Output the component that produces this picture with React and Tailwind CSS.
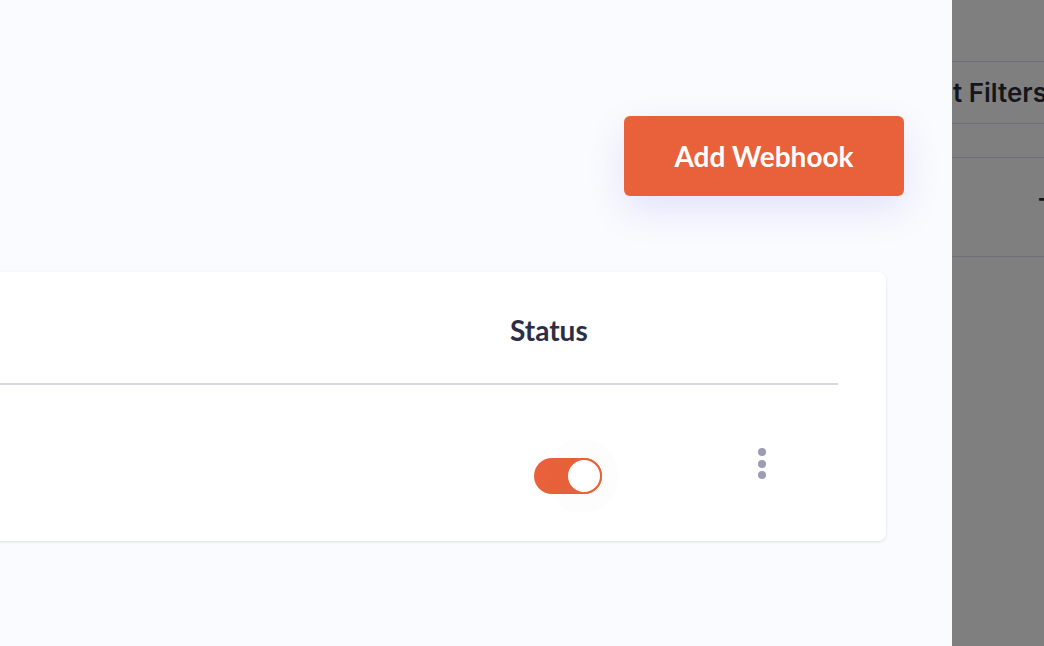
import React, { useState } from "react";

const Toggle = ({ on, onChange }) => (
  <button
    onClick={() => onChange(!on)}
    className="relative flex h-[36px] w-[68px] items-center rounded-full bg-[#e8613a]"
  >
    <span className="absolute right-[-17px] top-[-19px] h-[74px] w-[74px] rounded-full bg-[#000000]/[0.006]" />
    <span
      className={`absolute top-0 h-[36px] w-[36px] rounded-full border-2 border-[#e8613a] bg-white ${
        on ? "right-0" : "left-0"
      }`}
    />
  </button>
);

const Kebab = () => (
  <button className="flex flex-col items-center gap-[3.6px]">
    <span className="h-[8px] w-[8px] rounded-full bg-[#9c9db4]" />
    <span className="h-[8px] w-[8px] rounded-full bg-[#9c9db4]" />
    <span className="h-[8px] w-[8px] rounded-full bg-[#9c9db4]" />
  </button>
);

const Backdrop = () => (
  <div className="h-full w-[92px] shrink-0 overflow-hidden bg-[#7f7f7f] font-['Inter',sans-serif] text-[#15161b]">
    <div className="h-[62px] border-b border-[#6c6f74]" />
    <div className="flex h-[62px] items-center whitespace-nowrap border-b border-[#6c6f74] pl-[1px] text-[26px] font-semibold">
      t Filters
    </div>
    <div className="h-[34px] border-b border-[#6c6f74]" />
    <div className="flex h-[99px] items-center whitespace-nowrap border-b border-[#6c6f74] pl-[86px] text-[26px] font-semibold">
      T
    </div>
  </div>
);

export default function App() {
  const [enabled, setEnabled] = useState(true);

  return (
    <div className="flex h-[646px] w-full overflow-hidden font-['Lato',sans-serif]">
      <div className="flex min-w-0 flex-1 flex-col bg-[#fafbfe]">
        <div className="flex justify-end pr-[48px] pt-[116px]">
          <button className="h-[80px] w-[280px] rounded-[6px] bg-[#e8613a] text-[28px] font-bold text-white shadow-[0_14px_36px_rgba(98,104,230,0.16)]">
            Add Webhook
          </button>
        </div>

        <div className="ml-[-120px] mr-[66px] mt-[76px] rounded-[8px] bg-white pr-[48px] shadow-[0_1px_3px_rgba(30,30,60,0.12)]">
          <div className="flex h-[113px] items-start border-b-2 border-[#d6d6e4] pt-[44px]">
            <div className="flex-1" />
            <div className="w-[228px] text-[28px] font-bold leading-[28px] text-[#2c2e45]">
              Status
            </div>
            <div className="w-[100px]" />
          </div>
          <div className="flex h-[156px] items-start">
            <div className="flex-1" />
            <div className="w-[228px] pl-[24px] pt-[73px]">
              <Toggle on={enabled} onChange={setEnabled} />
            </div>
            <div className="w-[100px] pl-[20px] pt-[63px]">
              <Kebab />
            </div>
          </div>
        </div>
      </div>
      <Backdrop />
    </div>
  );
}
